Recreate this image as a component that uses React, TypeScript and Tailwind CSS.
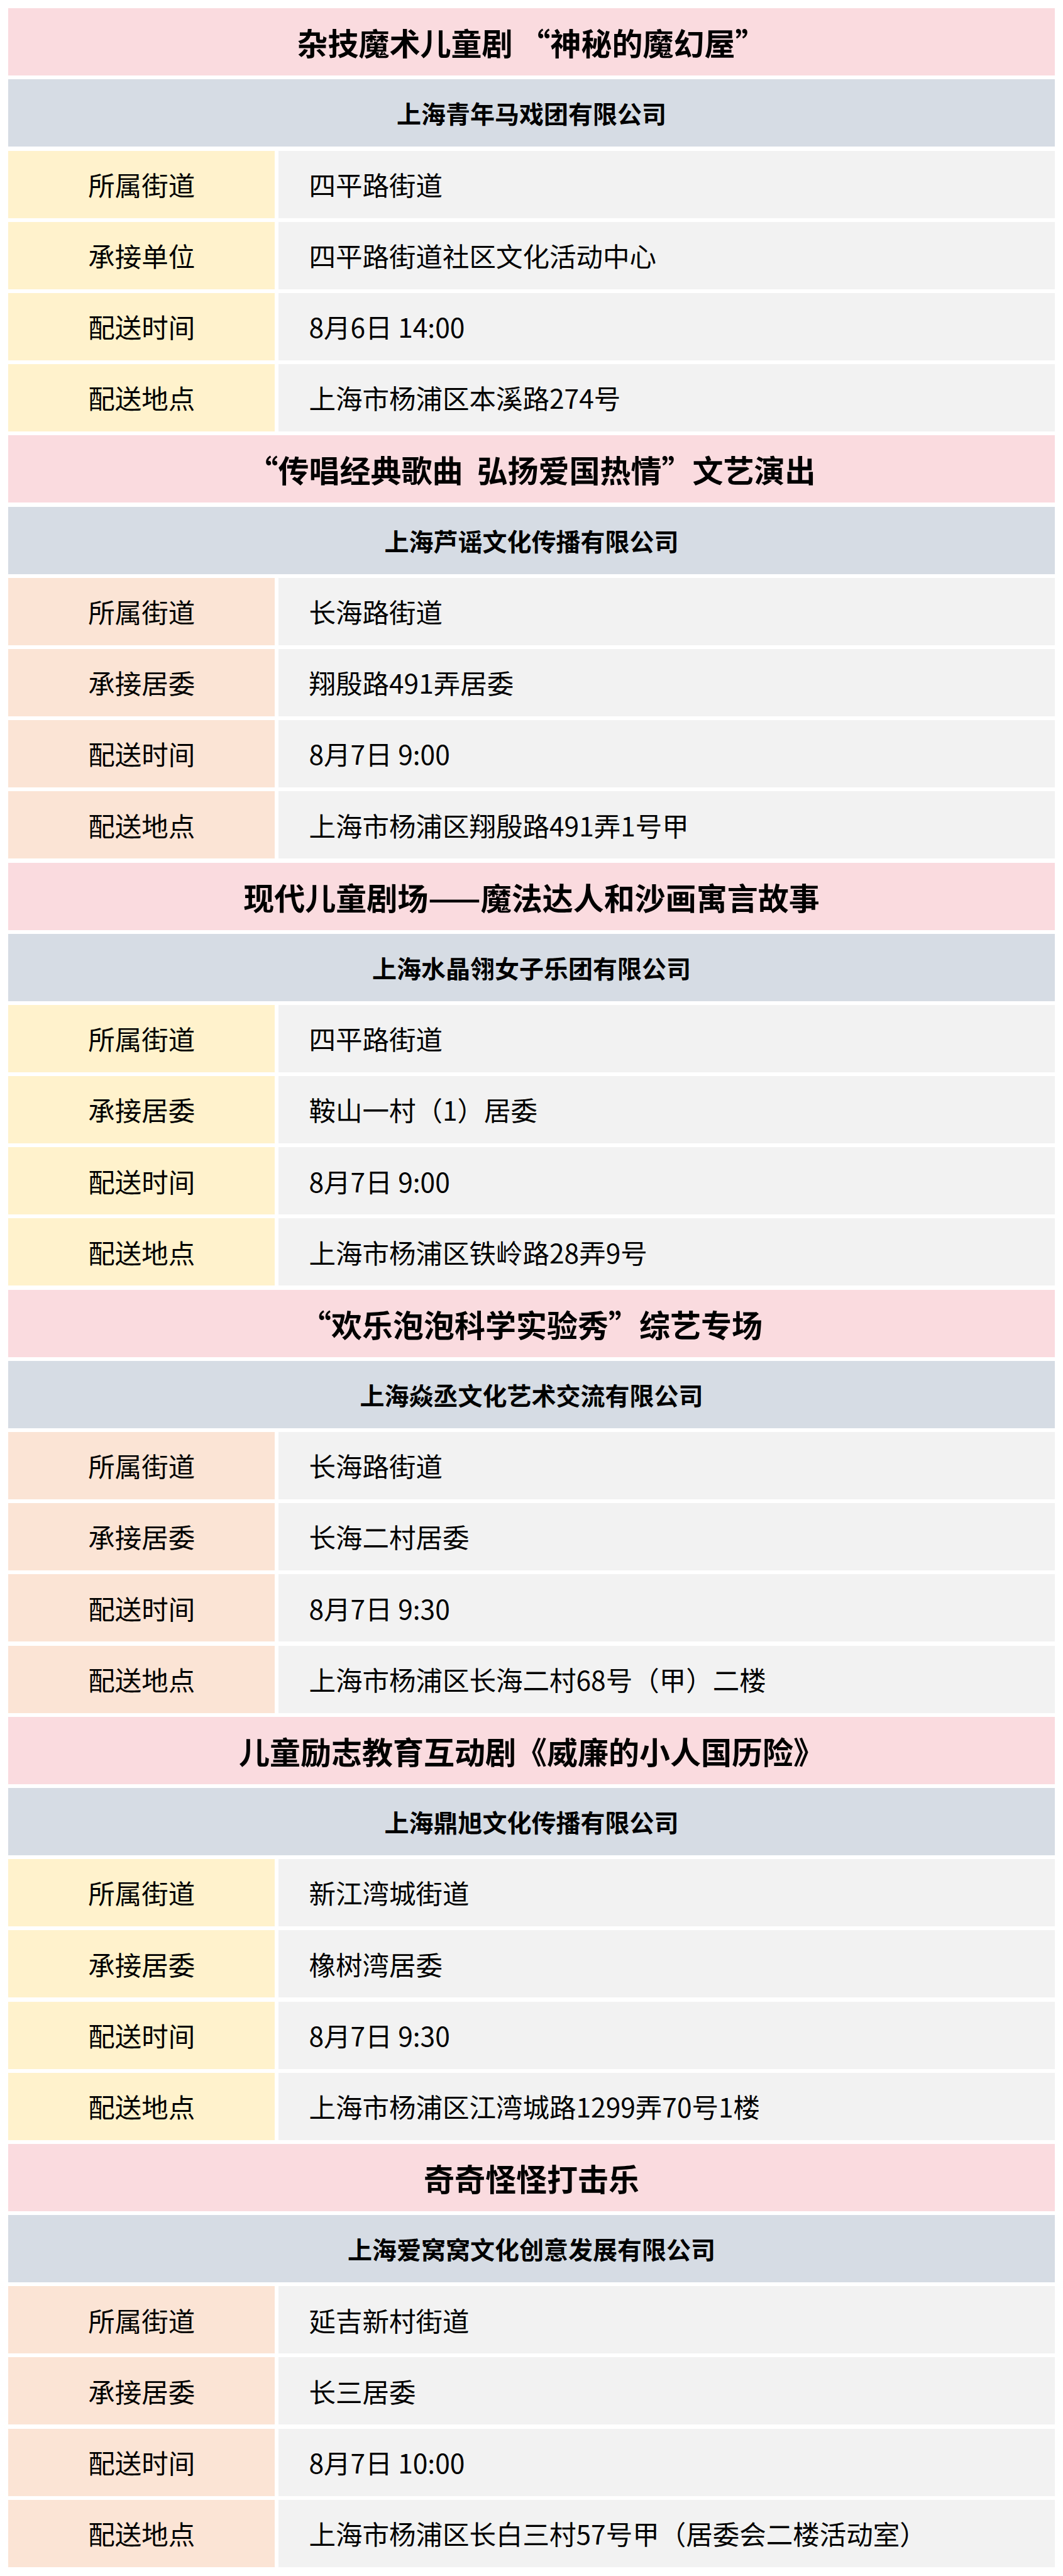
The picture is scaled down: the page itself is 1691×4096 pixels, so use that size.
import React from "react";

type Section = {
  title: string;
  company: string;
  tone: "yellow" | "peach";
  rows: [string, string][];
};

const sections: Section[] = [
  {
    title: "杂技魔术儿童剧 “神秘的魔幻屋”",
    company: "上海青年马戏团有限公司",
    tone: "yellow",
    rows: [
      ["所属街道", "四平路街道"],
      ["承接单位", "四平路街道社区文化活动中心"],
      ["配送时间", "8月6日 14:00"],
      ["配送地点", "上海市杨浦区本溪路274号"],
    ],
  },
  {
    title: "“传唱经典歌曲  弘扬爱国热情”文艺演出",
    company: "上海芦谣文化传播有限公司",
    tone: "peach",
    rows: [
      ["所属街道", "长海路街道"],
      ["承接居委", "翔殷路491弄居委"],
      ["配送时间", "8月7日 9:00"],
      ["配送地点", "上海市杨浦区翔殷路491弄1号甲"],
    ],
  },
  {
    title: "现代儿童剧场——魔法达人和沙画寓言故事",
    company: "上海水晶翎女子乐团有限公司",
    tone: "yellow",
    rows: [
      ["所属街道", "四平路街道"],
      ["承接居委", "鞍山一村（1）居委"],
      ["配送时间", "8月7日 9:00"],
      ["配送地点", "上海市杨浦区铁岭路28弄9号"],
    ],
  },
  {
    title: "“欢乐泡泡科学实验秀”综艺专场",
    company: "上海焱丞文化艺术交流有限公司",
    tone: "peach",
    rows: [
      ["所属街道", "长海路街道"],
      ["承接居委", "长海二村居委"],
      ["配送时间", "8月7日 9:30"],
      ["配送地点", "上海市杨浦区长海二村68号（甲）二楼"],
    ],
  },
  {
    title: "儿童励志教育互动剧《威廉的小人国历险》",
    company: "上海鼎旭文化传播有限公司",
    tone: "yellow",
    rows: [
      ["所属街道", "新江湾城街道"],
      ["承接居委", "橡树湾居委"],
      ["配送时间", "8月7日 9:30"],
      ["配送地点", "上海市杨浦区江湾城路1299弄70号1楼"],
    ],
  },
  {
    title: "奇奇怪怪打击乐",
    company: "上海爱窝窝文化创意发展有限公司",
    tone: "peach",
    rows: [
      ["所属街道", "延吉新村街道"],
      ["承接居委", "长三居委"],
      ["配送时间", "8月7日 10:00"],
      ["配送地点", "上海市杨浦区长白三村57号甲（居委会二楼活动室）"],
    ],
  },
];

export default function App() {
  return (
    <div
      className="w-[1691px] bg-white px-[13.3px] py-[13.3px] flex flex-col gap-[6.19px] text-black"
      style={{ fontFamily: '"Microsoft YaHei", "Noto Sans CJK SC", "Noto Sans", sans-serif' }}
    >
      {sections.map((s, i) => (
        <React.Fragment key={i}>
          <div className="h-[107px] bg-[#fadbdf] flex items-center justify-center text-[49px] font-bold leading-none whitespace-pre">
            {s.title}
          </div>
          <div className="h-[107px] bg-[#d6dce4] flex items-center justify-center text-[39px] font-bold leading-none">
            {s.company}
          </div>
          {s.rows.map(([k, v], j) => (
            <div key={j} className="h-[107px] flex gap-[6.19px]">
              <div
                className={
                  "w-[424px] shrink-0 flex items-center justify-center text-[42.5px] leading-none " +
                  (s.tone === "yellow" ? "bg-[#fff2cc]" : "bg-[#fbe4d5]")
                }
              >
                {k}
              </div>
              <div className="flex-1 bg-[#f2f2f2] flex items-center pl-[48px] text-[42.5px] leading-none">
                {v}
              </div>
            </div>
          ))}
        </React.Fragment>
      ))}
    </div>
  );
}
